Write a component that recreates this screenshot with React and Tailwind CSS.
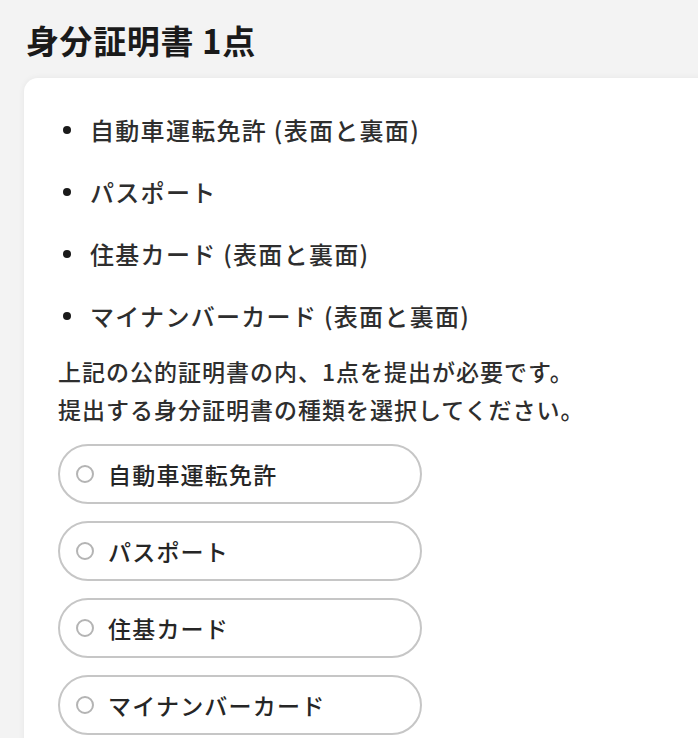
import React from 'react';

const docs = [
  '自動車運転免許 (表面と裏面)',
  'パスポート',
  '住基カード (表面と裏面)',
  'マイナンバーカード (表面と裏面)',
];

const options = ['自動車運転免許', 'パスポート', '住基カード', 'マイナンバーカード'];

export default function App() {
  return (
    <div
      className="min-h-[738px] bg-[#f3f3f3] overflow-hidden pt-[20px] pl-[24px]"
      style={{ fontFamily: "'Noto Sans CJK JP', 'Noto Sans', sans-serif" }}
    >
      <h1 className="pl-[2px] text-[33px] leading-[40px] font-bold tracking-[0.6px] text-[#1a1a1a]">身分証明書 1点</h1>

      <div className="mt-[18px] w-[720px] min-h-[700px] bg-white rounded-tl-[14px] shadow-[0_0_6px_rgba(0,0,0,0.06)] pt-[33px] pl-[34px]">
        <ul className="flex flex-col gap-[24px]">
          {docs.map((d) => (
            <li key={d} className="flex items-center text-[24px] leading-[38px] font-medium tracking-[1.3px] text-[#2e2e2e]">
              <span className="ml-[5px] w-[8px] h-[8px] rounded-full bg-[#1a1a1a]" />
              <span className="ml-[19px]">{d}</span>
            </li>
          ))}
        </ul>

        <p className="mt-[17px] text-[23px] leading-[38px] font-medium tracking-[1px] text-[#2e2e2e]">
          上記の公的証明書の内、1点を提出が必要です。
          <br />
          提出する身分証明書の種類を選択してください。
        </p>

        <div className="mt-[16px] flex flex-col gap-[17px]">
          {options.map((o) => (
            <label
              key={o}
              className="w-[364px] h-[60px] flex items-center rounded-full border-2 border-[#c6c6c6] bg-white pl-[16px]"
            >
              <span className="w-[18px] h-[18px] rounded-full border-2 border-[#b4b4b4] bg-white" />
              <span className="ml-[14px] text-[23px] font-medium tracking-[1.2px] text-[#262626]">{o}</span>
            </label>
          ))}
        </div>
      </div>
    </div>
  );
}
